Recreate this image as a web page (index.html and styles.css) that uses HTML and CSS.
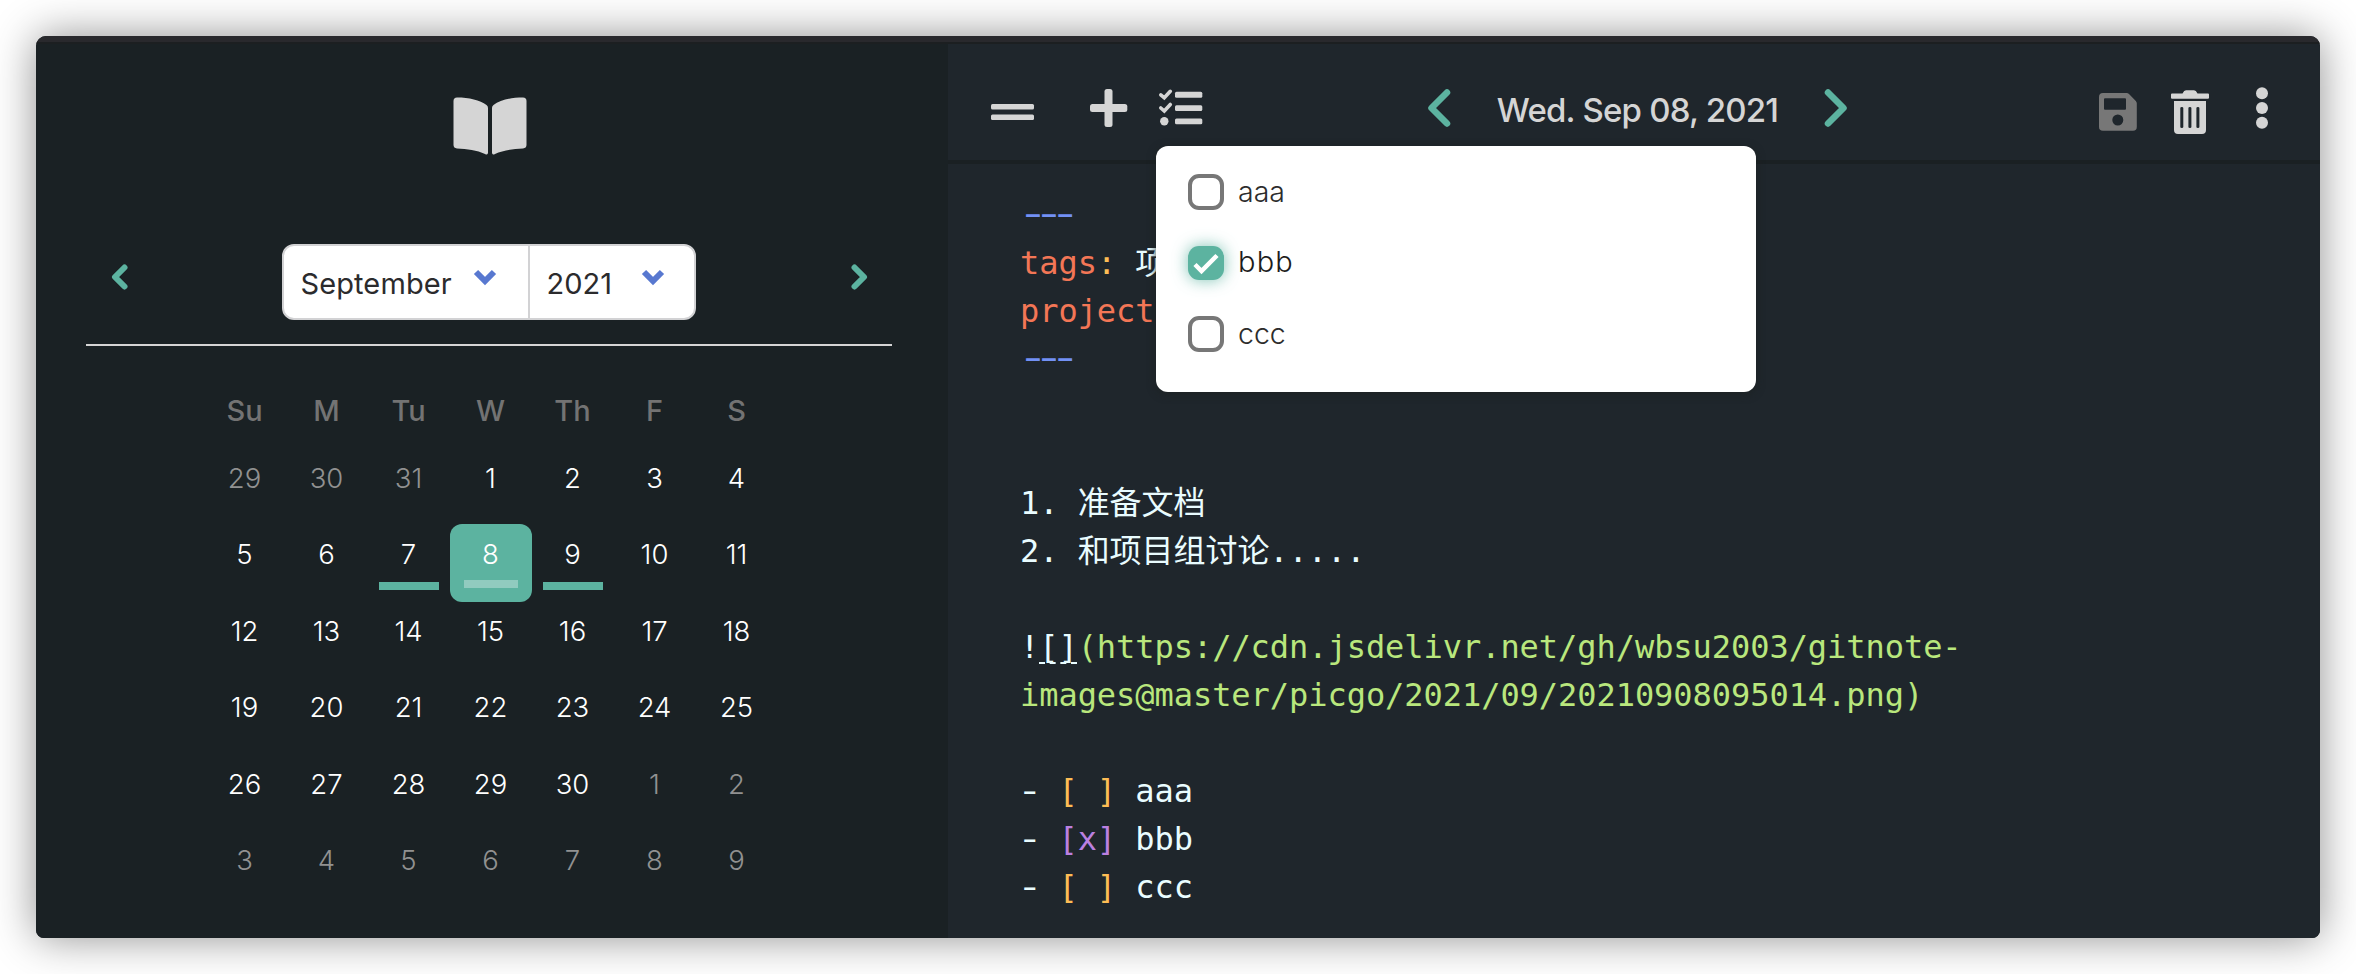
FILE: index.html
```html
<!DOCTYPE html>
<html lang="en">
<head>
<meta charset="utf-8">
<title>Daily notes</title>
<link rel="stylesheet" href="styles.css">
</head>
<body>
<div class="window">
  <div class="titlebar"></div>
  <div class="panes">
    <aside class="sidebar">
      <svg class="book" width="74" height="58" viewBox="0 0 74 58"><path d="M4 .5C16 .5 27 3 33.500 8Q35 9 35 11V55.500Q35 58.500 32 57C24 53 14 52 4 51.500Q.5 51 .5 48V4Q.5 .5 4 .5ZM70 .5C58 .5 47 3 40.500 8Q39 9 39 11V55.500Q39 58.500 42 57C50 53 60 52 70 51.500Q73.500 51 73.500 48V4Q73.500 .5 70 .5Z"/></svg>
      <div class="month-bar">
        <svg class="nav" width="18" height="28" viewBox="0 0 18 28"><path d="M13.500 4.500L4 14L13.500 23.500"/></svg>
        <div class="selects">
          <div class="select month">September<svg width="24" height="18" viewBox="0 0 24 18"><path d="M3 4L12 13L21 4"/></svg></div>
          <div class="select year">2021<svg width="24" height="18" viewBox="0 0 24 18"><path d="M3 4L12 13L21 4"/></svg></div>
        </div>
        <svg class="nav" width="18" height="28" viewBox="0 0 18 28"><path d="M4.500 4.500L14 14L4.500 23.500"/></svg>
      </div>
      <div class="weekdays"><span>Su</span><span>M</span><span>Tu</span><span>W</span><span>Th</span><span>F</span><span>S</span></div>
      <div class="days">
        <span class="out">29</span><span class="out">30</span><span class="out">31</span><span>1</span><span>2</span><span>3</span><span>4</span>
        <span>5</span><span>6</span><span class="note">7</span><span class="selected">8</span><span class="note">9</span><span>10</span><span>11</span>
        <span>12</span><span>13</span><span>14</span><span>15</span><span>16</span><span>17</span><span>18</span>
        <span>19</span><span>20</span><span>21</span><span>22</span><span>23</span><span>24</span><span>25</span>
        <span>26</span><span>27</span><span>28</span><span>29</span><span>30</span><span class="out">1</span><span class="out">2</span>
        <span class="out">3</span><span class="out">4</span><span class="out">5</span><span class="out">6</span><span class="out">7</span><span class="out">8</span><span class="out">9</span>
      </div>
    </aside>
    <main class="main">
      <header class="toolbar">
        <div class="tools">
          <svg class="ic" width="44" height="68" viewBox="991 68 44 68"><rect x="991" y="104" width="43" height="5.500" rx="1.500"/><rect x="991" y="114.500" width="43" height="5.500" rx="1.500"/></svg>
          <svg class="ic plus" width="38" height="68" viewBox="1090 68 38 68"><rect x="1090" y="104" width="37.300" height="8" rx="2.500"/><rect x="1104.500" y="89" width="8" height="38" rx="2.500"/></svg>
          <svg class="ic list" width="46" height="68" viewBox="1158 68 46 68"><rect x="1175" y="91.800" width="27.300" height="5.900" rx="1.500"/><rect x="1175" y="105.200" width="27.300" height="5.900" rx="1.500"/><rect x="1175" y="118.400" width="27.300" height="5.900" rx="1.500"/><circle cx="1164.300" cy="121.300" r="4.200"/><path class="tick" d="M1160.800 94.800L1164.300 97.800L1170.300 91.300M1160.800 108L1164.300 111L1170.300 104.500"/></svg>
        </div>
        <div class="date">
          <svg class="nav big" width="24" height="68" viewBox="1427 68 24 68"><path d="M1447 92.500L1431.500 108L1447 123.500"/></svg>
          <span class="date-text">Wed. Sep 08, 2021</span>
          <svg class="nav big" width="24" height="68" viewBox="1824 68 24 68"><path d="M1828 92.500L1843.500 108L1828 123.500"/></svg>
        </div>
        <div class="actions">
          <svg class="ic save" width="38" height="68" viewBox="2099 68 38 68"><path fill-rule="evenodd" d="M2103 93H2126.500Q2128 93 2129 94L2135.800 101Q2136.800 102 2136.800 103.500V127Q2136.800 130.800 2133 130.800H2103Q2099 130.800 2099 127V97Q2099 93 2103 93ZM2105 98.300Q2104 98.300 2104 99.300V108.700Q2104 109.700 2105 109.700H2125Q2126 109.700 2126 108.700V99.300Q2126 98.300 2125 98.300ZM2117.800 114.500A5.500 5.500 0 1 0 2117.800 125.500A5.500 5.500 0 1 0 2117.800 114.500Z"/></svg>
          <svg class="ic" width="38" height="68" viewBox="2171 68 38 68"><path fill-rule="evenodd" d="M2172 93.500H2182.500Q2184 90.300 2186 90.300H2194Q2196 90.300 2197.500 93.500H2208Q2209 93.500 2209 94.500V97.700Q2209 98.700 2208 98.700H2172Q2171 98.700 2171 97.700V94.500Q2171 93.500 2172 93.500ZM2174 101H2206V130Q2206 134 2202 134H2178Q2174 134 2174 130ZM2180.300 108V127Q2180.300 128 2181.800 128Q2183.300 128 2183.300 127V108Q2183.300 107 2181.800 107Q2180.300 107 2180.300 108ZM2188.400 108V127Q2188.400 128 2189.900 128Q2191.400 128 2191.400 127V108Q2191.400 107 2189.900 107Q2188.400 107 2188.400 108ZM2196.400 108V127Q2196.400 128 2197.900 128Q2199.400 128 2199.400 127V108Q2199.400 107 2197.900 107Q2196.400 107 2196.400 108Z"/></svg>
          <svg class="ic" width="12" height="68" viewBox="2256 68 12 68"><circle cx="2262" cy="93.300" r="6"/><circle cx="2262" cy="108" r="6"/><circle cx="2262" cy="122.700" r="6"/></svg>
        </div>
        <div class="popup">
          <div class="task"><i class="box"></i>aaa</div>
          <div class="task done"><i class="box"><svg width="26" height="22" viewBox="0 0 26 22"><path d="M2 11.500L8.500 18L24 2.500"/></svg></i>bbb</div>
          <div class="task"><i class="box"></i>ccc</div>
        </div>
      </header>
      <div class="editor">
        <div class="line"><span class="rule">---</span></div>
        <div class="line"><span class="key">tags</span><span class="punct">:</span> 项目</div>
        <div class="line"><span class="key">project</span></div>
        <div class="line"><span class="rule">---</span></div>
        <div class="line"></div>
        <div class="line"></div>
        <div class="line">1. 准备文档</div>
        <div class="line">2. 和项目组讨论.....</div>
        <div class="line"></div>
        <div class="line">!<span class="alt">[]</span><span class="url">(https://cdn.jsdelivr.net/gh/wbsu2003/gitnote-</span></div>
        <div class="line"><span class="url">images@master/picgo/2021/09/20210908095014.png)</span></div>
        <div class="line"></div>
        <div class="line"><span class="dash">-</span> <span class="punct">[ ]</span> aaa</div>
        <div class="line"><span class="dash">-</span> <span class="checked">[x]</span> bbb</div>
        <div class="line"><span class="dash">-</span> <span class="punct">[ ]</span> ccc</div>
      </div>
    </main>
  </div>
</div>
</body>
</html>
```
FILE: styles.css
```css
* { box-sizing: border-box; }
body {
  margin: 0;
  padding: 36px;
  height: 974px;
  background: #fff;
  font-family: Inter, "Noto Sans", sans-serif;
  overflow: hidden;
}
svg { display: block; flex: none; }
.window {
  height: 902px;
  border-radius: 10px 10px 8px 8px;
  overflow: hidden;
  background: #1a2023;
  box-shadow: 0 0 44px rgba(0, 0, 0, .44);
}
.titlebar { height: 8px; background: #29292d; border-bottom: 2px solid #1c1f21; }
.panes { display: flex; height: 894px; }

.sidebar { width: 912px; padding: 53px 0 0 50px; background: #1a2124; }
.book { margin-left: 366.500px; fill: #d5d5d5; }
.month-bar {
  display: flex;
  justify-content: space-between;
  width: 806px;
  height: 102px;
  margin-top: 89px;
  padding: 0 24px 0 25px;
  border-bottom: 2px solid #d5d5d5;
}
.nav { fill: none; stroke: #5cb3a0; stroke-width: 6; stroke-linecap: round; stroke-linejoin: round; margin-top: 19px; }
.selects {
  display: flex;
  width: 414px;
  height: 76px;
  margin-right: 2px;
  border: 2px solid #d2d2d4;
  border-radius: 12px;
  background: #fff;
}
.select { display: flex; padding-left: 17px; font-size: 29px; line-height: 75px; color: #2b2b2d; }
.select svg { margin-top: 22px; fill: none; stroke: #5878d0; stroke-width: 6; }
.month { width: 246px; border-right: 2px solid #d2d2d4; letter-spacing: .1px; }
.month svg { margin-left: auto; margin-right: 31px; }
.year { flex: 1; padding-left: 17px; }
.year svg { margin-left: auto; margin-right: 29px; }
.weekdays, .days { display: grid; grid-template-columns: repeat(7, 82px); margin-left: 117.500px; text-align: center; }
.weekdays { margin-top: 45px; height: 40px; font-size: 29px; font-weight: 500; line-height: 40px; color: #737373; }
.days { margin-top: 17px; grid-auto-rows: 76.400px; }
.days span {
  position: relative;
  height: 78px;
  padding-top: 10px;
  font-size: 27.500px;
  font-weight: 300;
  line-height: 40px;
  color: #fff;
}
.days .out { color: #919191; }
.note::after, .selected::after { content: ""; position: absolute; left: 11px; top: 38px; width: 60px; height: 8px; background: #5cb3a0; }
.days .note::after { top: 58px; }
.days .selected { background: #5cb3a0; border-radius: 12px; }
.days .selected::after { left: 14px; top: 56px; width: 54px; background: #91cbbf; }

.main { flex: 1; background: #1f262c; }
.toolbar {
  position: relative;
  display: flex;
  align-items: center;
  height: 120px;
  padding: 0 52px 0 43px;
  border-bottom: 4px solid #1a2023;
}
.tools, .date, .actions { display: flex; align-items: center; }
.ic { fill: #d5d5d5; }
.plus { margin-left: 55px; }
.list { margin-left: 30px; }
.tick { fill: none; stroke: #d5d5d5; stroke-width: 3.600; stroke-linecap: round; }
.date { width: 421px; margin-left: 223px; justify-content: space-between; }
.big { margin-top: 0; stroke-width: 6.500; }
.date-text { font-size: 33px; font-weight: 500; letter-spacing: -.8px; line-height: 40px; color: #d5d5d5; margin-top: 16px; white-space: nowrap; }
.actions { gap: 34px; margin-left: auto; }
.actions svg:last-child { margin-left: 13px; }
.save { fill: #777; }
.popup {
  position: absolute;
  z-index: 2;
  left: 208px;
  top: 102px;
  width: 600px;
  height: 246px;
  padding: 28px 32px;
  border-radius: 12px;
  background: #fff;
  box-shadow: 0 2px 8px rgba(27, 32, 32, .8);
}
.task { display: flex; gap: 14px; height: 71px; font-size: 28.500px; font-weight: 300; line-height: 36px; color: #2c2c2c; }
.box { display: block; flex: none; width: 36px; height: 36px; border: 4px solid #777; border-radius: 11px; }
.done { color: #1c1c1c; font-size: 29px; letter-spacing: 1.200px; line-height: 34px; }
.done .box { height: 34px; margin-top: 1px; border: 0; padding: 7px 5px; background: #5cb3a0; box-shadow: 0 0 16px rgba(92, 179, 160, .8); }
.done svg { fill: none; stroke: #fff; stroke-width: 4.500; }

.editor { padding: 27px 72px; font-family: "DejaVu Sans Mono", "Noto Sans CJK SC", monospace; font-size: 32px; letter-spacing: -.05px; color: #e9fcff; }
.line { height: 48px; line-height: 48px; white-space: pre; }
.rule { display: inline-block; transform: scaleX(1.600); transform-origin: 0 50%; font-family: Roboto, sans-serif; font-size: 36px; letter-spacing: .1px; margin-left: 5px; color: #7291f5; }
.dash { display: inline-block; transform: scaleX(1.350); }
.key { color: #f37656; }
.punct { color: #fdbd55; }
.url { color: #b9e77d; }
.checked { color: #bb80e0; }
.alt { text-decoration: underline dashed 2px; text-underline-offset: 4px; }
```
